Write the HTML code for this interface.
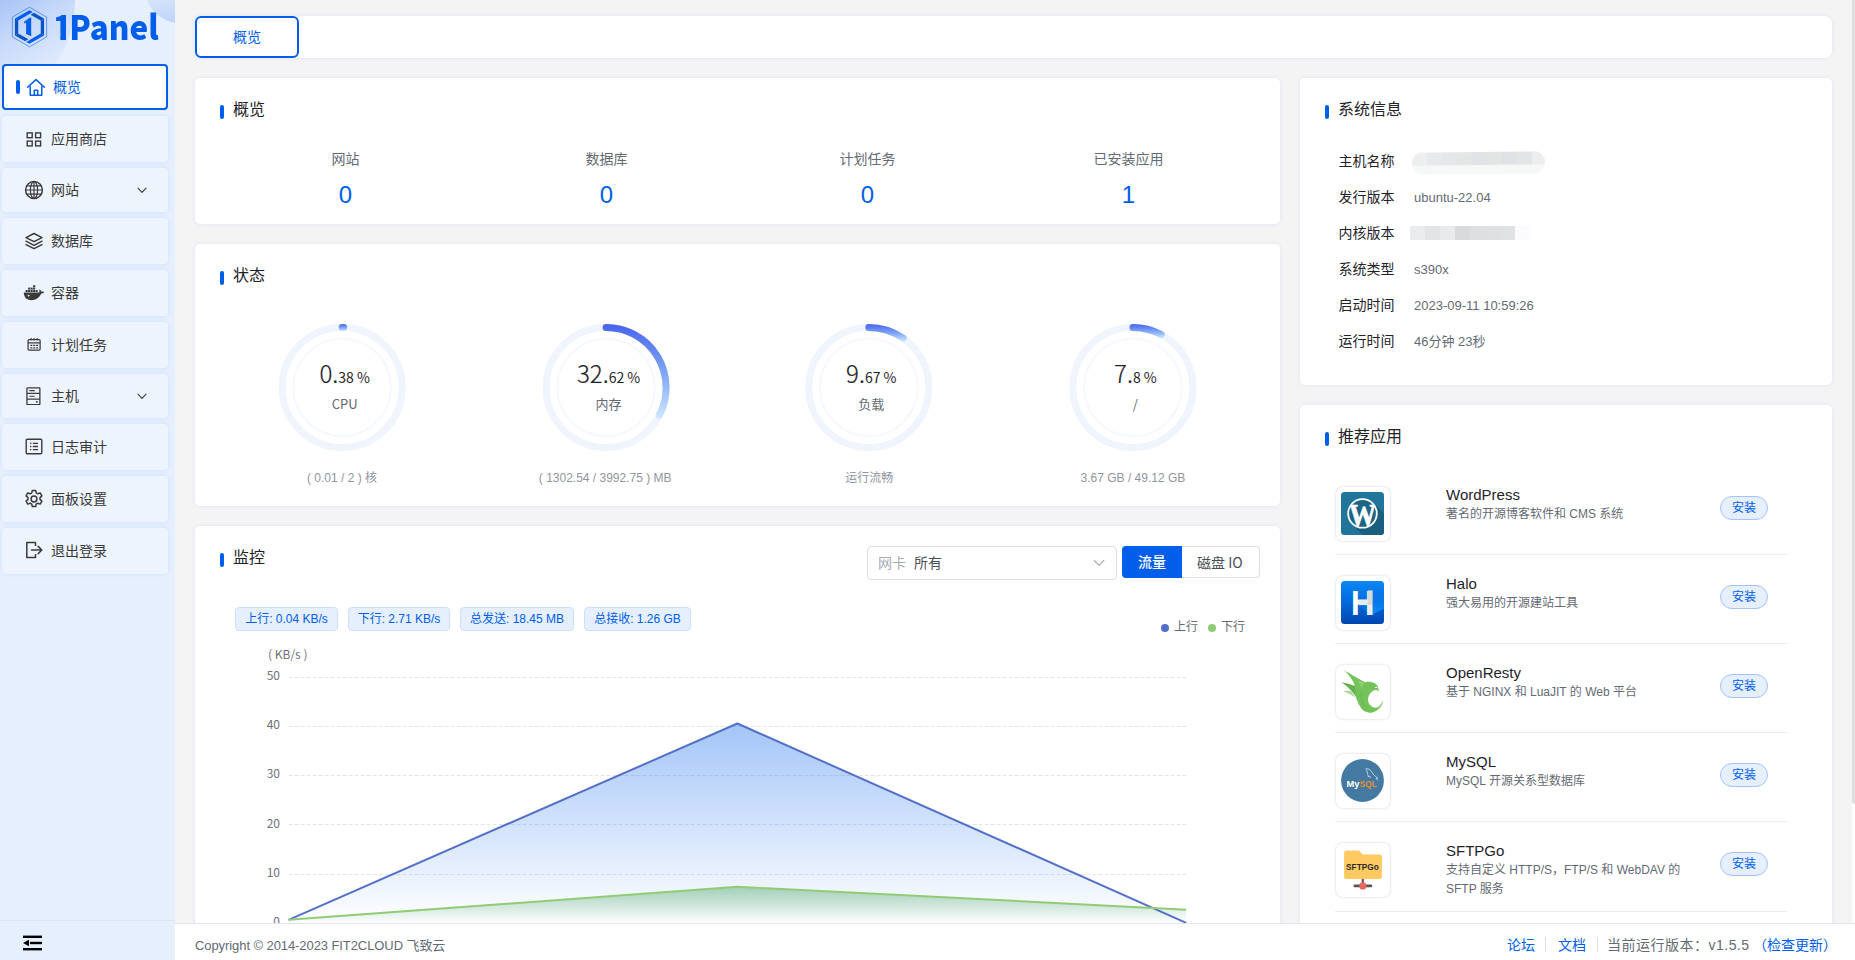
<!DOCTYPE html>
<html lang="zh-CN">
<head>
<meta charset="utf-8">
<title>1Panel</title>
<style>
*{box-sizing:border-box;margin:0;padding:0}
html,body{width:1855px;height:960px;overflow:hidden}
body{position:relative;background:#f4f4f4;font-family:"Liberation Sans","Noto Sans CJK SC",sans-serif;font-size:14px;color:#333;-webkit-font-smoothing:antialiased}
.abs{position:absolute}
.t{position:absolute;white-space:nowrap;line-height:1}
/* sidebar */
#side{position:absolute;left:0;top:0;width:175px;height:960px;background:#e5effe;overflow:hidden}
#side .blob1{position:absolute;left:-149px;top:-111px;width:224px;height:224px;border-radius:50%;background:linear-gradient(150deg,#a6c4f6 0,#c6d9fa 36px,#dce8fc 78px,#e5effe 112px) 149px 111px/90px 120px no-repeat}
#side .blob2{position:absolute;left:145px;top:-47px;width:70px;height:70px;border-radius:50%;background:linear-gradient(170deg,#d9e6fc 55%,#b5cef9 100%)}
.mi{position:absolute;left:2px;width:166px;height:46px;border-radius:4px;background:#eef4fe;box-shadow:0 0 4px rgba(0,94,235,.10)}
.mi.h44{height:44px}
.mi.act{background:#fff;border:2px solid #005eeb;box-shadow:none}
.mi .lb{position:absolute;left:49px;top:50%;transform:translateY(-50%);font-size:14px;line-height:20px;color:#3a3a3a;white-space:nowrap}
.mi.act .lb{left:49px;color:#005eeb}
.mi svg{position:absolute}
/* cards */
.card{position:absolute;background:#fff;border-radius:5px;box-shadow:0 0 4px rgba(0,94,235,.10)}
.ttl{position:absolute;font-size:16px;line-height:20px;color:#1f2329;white-space:nowrap}
.bar{position:absolute;width:4px;height:14px;border-radius:2px;background:#005eeb}
.g{color:#646a73}
.blue{color:#005eeb}
</style>
</head>
<body>
<!-- SIDEBAR -->
<div id="side">
  <div class="blob1"></div>
  <div class="blob2"></div>
  <div id="logo">
    <svg class="abs" style="left:9px;top:4px" width="41" height="46" viewBox="-20.500 -23 41 46">
      <polygon points="0,-19.800 17.150,-9.900 17.150,9.900 0,19.800 -17.150,9.900 -17.150,-9.900" fill="none" stroke="#2f76ef" stroke-width="0.700"/>
      <polygon points="-14.550,-8.400 0,-16.800 3.290,-14.900 -11.260,-6.500" fill="#005eeb"/>
      <polygon points="-14.550,-8.400 -14.550,8.400 -11.260,6.500 -11.260,-6.500" fill="#0b54c6"/>
      <polygon points="-4.390,14.270 -14.550,8.400 -11.260,6.500 -1.100,12.370" fill="#0b54c6"/>
      <polygon points="14.550,8.400 0,16.800 -3.290,14.900 11.260,6.500" fill="#005eeb"/>
      <polygon points="14.550,8.400 14.550,-8.400 11.260,-6.500 11.260,6.500" fill="#0b54c6"/>
      <polygon points="4.390,-14.270 14.550,-8.400 11.260,-6.500 1.100,-12.370" fill="#0b54c6"/>
      <polygon points="1.700,-9.200 0.100,-9.200 -5.300,-5.300 -5.300,-3.600 -3.400,-4.300 -3.400,6.900 1.700,9.200" fill="#005eeb"/>
    </svg>
    <div class="t" id="logotxt" style="left:55px;top:6px;font-size:34px;line-height:40px;font-weight:900;font-family:'Noto Sans CJK SC','Liberation Sans',sans-serif;color:#005eeb;transform-origin:0 0;transform:scaleX(.925)"><span style="display:inline-block;margin-left:-2.200px;margin-right:-3.100px;clip-path:polygon(0 0,100% 0,100% 28px,14.050px 28px,14.050px 40px,7.950px 40px,7.950px 28px,0 28px)">1</span>Panel</div>
  </div>
  <div id="menu">
    <div class="mi act" style="top:64px"><div class="abs" style="left:12px;top:14px;width:4px;height:14px;border-radius:2px;background:#005eeb"></div><svg style="left:22px;top:12px" width="20" height="19" viewBox="0 0 20 19" fill="none" stroke="#005eeb" stroke-width="1.5" stroke-linejoin="round" stroke-linecap="round"><path d="M1.6 9.3 L10 1.6 L18.4 9.3"/><path d="M4.2 8.2 V17.2 H15.8 V8.2"/><path d="M8.3 17 V12.2 H11.7 V17"/></svg><span class="lb">概览</span></div>
    <div class="mi" style="top:116px"><svg style="left:24px;top:16px" width="16" height="15" viewBox="0 0 16 15" fill="none" stroke="#3a3a3a" stroke-width="1.4"><rect x="1.2" y="0.9" width="5" height="4.8"/><rect x="9.6" y="0.9" width="5" height="4.8"/><rect x="1.2" y="9.1" width="5" height="4.8"/><rect x="9.6" y="9.1" width="5" height="4.8"/></svg><span class="lb">应用商店</span></div>
    <div class="mi h44" style="top:168px"><svg style="left:22px;top:12px" width="20" height="20" viewBox="0 0 20 20" fill="none" stroke="#3a3a3a" stroke-width="1.2"><circle cx="10" cy="10" r="8.4" stroke-width="1.5"/><ellipse cx="10" cy="10" rx="3.6" ry="8.4"/><path d="M10 1.6V18.4M1.6 10H18.4M2.8 5.8H17.2M2.8 14.2H17.2"/></svg><span class="lb">网站</span><svg style="left:135px;top:19px" width="10" height="7" viewBox="0 0 10 7" fill="none" stroke="#3a3a3a" stroke-width="1.1" stroke-linecap="round" stroke-linejoin="round"><path d="M1 1.200L5 5.400L9 1.200"/></svg></div>
    <div class="mi" style="top:218px"><svg style="left:22px;top:14px" width="20" height="18" viewBox="0 0 20 18" fill="none" stroke="#3a3a3a" stroke-width="1.5" stroke-linejoin="round" stroke-linecap="round"><path d="M10 1.5 L18 5.6 L10 9.7 L2 5.6 Z"/><path d="M2 9.2 L10 13.3 L18 9.2"/><path d="M2 12.6 L10 16.7 L18 12.6"/></svg><span class="lb">数据库</span></div>
    <div class="mi" style="top:270px"><svg style="left:21px;top:15px" width="22" height="16" viewBox="0 0 22 16" fill="#3a3a3a"><path d="M0.8 7.6 H16.2 C16.6 6.6 16.6 5.6 16.1 4.6 C17.4 4.9 18.1 5.8 18.3 6.6 C19.4 6.3 20.6 6.5 21.3 7 C20.6 8.2 19.4 8.6 18.2 8.6 C16.6 12.6 13.3 15.2 8.3 15.2 C3.6 15.2 0.9 12.6 0.8 7.6 Z"/><rect x="2.6" y="5" width="2.1" height="2"/><rect x="5.1" y="5" width="2.1" height="2"/><rect x="7.6" y="5" width="2.1" height="2"/><rect x="10.1" y="5" width="2.1" height="2"/><rect x="12.6" y="5" width="2.1" height="2"/><rect x="5.1" y="2.6" width="2.1" height="2"/><rect x="7.6" y="2.6" width="2.1" height="2"/><rect x="10.1" y="2.6" width="2.1" height="2"/><rect x="10.1" y="0.2" width="2.1" height="2"/><circle cx="5.6" cy="10.6" r="0.9" fill="#eef4fe"/></svg><span class="lb">容器</span></div>
    <div class="mi" style="top:322px"><svg style="left:25px;top:15.300px" width="14.200" height="14.600" viewBox="0 0 16 16" fill="none" stroke="#3a3a3a" stroke-width="1.4"><rect x="1.2" y="2.6" width="13.6" height="12" rx="1.2"/><path d="M1.2 6.4H14.8" /><path d="M4.6 0.8V3.4M8 0.8V3.4M11.4 0.8V3.4" stroke-width="1.3"/><path d="M3.8 9.3H6M7 9.3H9.2M10.2 9.3H12.4M3.8 12H6M7 12H9.2M10.2 12H12.4" stroke-width="1.5"/></svg><span class="lb">计划任务</span></div>
    <div class="mi h44" style="top:374px"><svg style="left:24.400px;top:12.500px" width="14.800" height="18.500" viewBox="0 0 16 20" fill="none" stroke="#3a3a3a" stroke-width="1.4"><rect x="1" y="1" width="14" height="18" rx="0.6"/><path d="M1 7H15M1 13H15"/><path d="M3.6 4H9.4M3.6 10H9.4" stroke-width="1.3"/><path d="M10.6 16H12.6" stroke-width="1.6"/></svg><span class="lb">主机</span><svg style="left:135px;top:19px" width="10" height="7" viewBox="0 0 10 7" fill="none" stroke="#3a3a3a" stroke-width="1.1" stroke-linecap="round" stroke-linejoin="round"><path d="M1 1.200L5 5.400L9 1.200"/></svg></div>
    <div class="mi" style="top:424px"><svg style="left:23px;top:14px" width="18" height="17" viewBox="0 0 18 17" fill="none" stroke="#3a3a3a" stroke-width="1.4"><rect x="1.2" y="1.2" width="15.6" height="14.6" rx="1.2"/><path d="M5 5.4H6.4M7.8 5.4H13M5 8.5H6.4M7.8 8.5H13M5 11.6H6.4M7.8 11.6H13" stroke-width="1.3"/></svg><span class="lb">日志审计</span></div>
    <div class="mi" style="top:476px"><svg style="left:22px;top:13px" width="20" height="20" viewBox="0 0 20 20" fill="none" stroke="#3a3a3a" stroke-width="1.5" stroke-linejoin="round"><path d="M8.3 1.4h3.4l.5 2.5 1.6.9 2.4-.9 1.7 3-1.9 1.7v1.8l1.9 1.7-1.7 3-2.4-.9-1.6.9-.5 2.5H8.3l-.5-2.5-1.6-.9-2.4.9-1.7-3 1.9-1.7V8.6L2.100 6.900l1.700-3 2.400.9 1.600-.9z"/><circle cx="10" cy="10" r="2.9"/></svg><span class="lb">面板设置</span></div>
    <div class="mi" style="top:528px"><svg style="left:23px;top:13px" width="19" height="18" viewBox="0 0 19 18" fill="none" stroke="#3a3a3a" stroke-width="1.5" stroke-linejoin="round"><path d="M10.5 5V1.400H1.800V16.600H10.500V13"/><path d="M6.500 9H16.500M13.200 5.400L16.800 9L13.200 12.600" stroke-linecap="round"/></svg><span class="lb">退出登录</span></div>
  </div>
  <div class="abs" style="left:0;top:920px;width:175px;height:1px;background:#dfe5f0"></div>
  <div id="collapse">
    <svg class="abs" style="left:23px;top:935px" width="20" height="17" viewBox="0 0 20 17" fill="#000"><rect x="0" y="0.600" width="19" height="2.400"/><rect x="7" y="6.800" width="12" height="2.400"/><rect x="0" y="13" width="19" height="2.400"/><path d="M0 8L6 4.800V11.200Z"/></svg>
  </div>
</div>

<!-- TOP TAB BAR -->
<div class="card" style="left:195px;top:16px;width:1637px;height:42px;border-radius:5px 8px 8px 5px"></div>
<div class="abs" style="left:195px;top:16px;width:104px;height:42px;border:2px solid #005eeb;border-radius:6px;background:#fff"></div>
<div class="t blue" style="left:233px;top:29px;font-size:14px;line-height:16px">概览</div>

<!-- OVERVIEW CARD -->
<div class="card" id="c-over" style="left:195px;top:78px;width:1085px;height:146px">
  <div class="bar" style="left:25px;top:27px"></div>
  <div class="ttl" style="left:38px;top:22px">概览</div>
  <div class="t g" style="left:90.5px;width:120px;text-align:center;top:73px;font-size:14px;line-height:16px">网站</div>
  <div class="t blue" style="left:90.5px;width:120px;text-align:center;top:102.500px;font-size:24px;line-height:28px">0</div>
  <div class="t g" style="left:351.5px;width:120px;text-align:center;top:73px;font-size:14px;line-height:16px">数据库</div>
  <div class="t blue" style="left:351.5px;width:120px;text-align:center;top:102.500px;font-size:24px;line-height:28px">0</div>
  <div class="t g" style="left:612.5px;width:120px;text-align:center;top:73px;font-size:14px;line-height:16px">计划任务</div>
  <div class="t blue" style="left:612.5px;width:120px;text-align:center;top:102.500px;font-size:24px;line-height:28px">0</div>
  <div class="t g" style="left:873.5px;width:120px;text-align:center;top:73px;font-size:14px;line-height:16px">已安装应用</div>
  <div class="t blue" style="left:873.5px;width:120px;text-align:center;top:102.500px;font-size:24px;line-height:28px">1</div>
</div>
<!-- STATUS CARD -->
<div class="card" id="c-stat" style="left:195px;top:244px;width:1085px;height:262px">
  <div class="bar" style="left:25px;top:27px"></div>
  <div class="ttl" style="left:38px;top:22px">状态</div>
  <svg class="abs" style="left:0;top:0" width="1085" height="262" viewBox="0 0 1085 262">
    <defs>
      <linearGradient id="gg0" gradientUnits="userSpaceOnUse" x1="0" y1="80.0" x2="0" y2="87.0"><stop offset="0" stop-color="#4863ee"/><stop offset=".55" stop-color="#84a9f7"/><stop offset="1" stop-color="#d0e8ff"/></linearGradient>
      <linearGradient id="gg1" gradientUnits="userSpaceOnUse" x1="0" y1="80.0" x2="0" y2="174.6"><stop offset="0" stop-color="#4863ee"/><stop offset=".55" stop-color="#84a9f7"/><stop offset="1" stop-color="#d0e8ff"/></linearGradient>
      <linearGradient id="gg2" gradientUnits="userSpaceOnUse" x1="0" y1="80.0" x2="0" y2="97.7"><stop offset="0" stop-color="#4863ee"/><stop offset=".55" stop-color="#84a9f7"/><stop offset="1" stop-color="#d0e8ff"/></linearGradient>
      <linearGradient id="gg3" gradientUnits="userSpaceOnUse" x1="0" y1="80.0" x2="0" y2="94.1"><stop offset="0" stop-color="#4863ee"/><stop offset=".55" stop-color="#84a9f7"/><stop offset="1" stop-color="#d0e8ff"/></linearGradient>
    </defs>
    <circle cx="147.2" cy="143.5" r="60" fill="none" stroke="#eff4fd" stroke-width="7"/>
    <circle cx="147.2" cy="143.5" r="49" fill="none" stroke="#f5f8fe" stroke-width="3" opacity=".45"/>
    <circle cx="147.2" cy="143.5" r="48.5" fill="none" stroke="#f4f7fe" stroke-width="1.200"/>
    <path d="M147.20 83.50 A60 60 0 0 1 148.63 83.52" fill="none" stroke="url(#gg0)" stroke-width="7" stroke-linecap="round"/>
    <circle cx="411.1" cy="143.5" r="60" fill="none" stroke="#eff4fd" stroke-width="7"/>
    <circle cx="411.1" cy="143.5" r="49" fill="none" stroke="#f5f8fe" stroke-width="3" opacity=".45"/>
    <circle cx="411.1" cy="143.5" r="48.5" fill="none" stroke="#f4f7fe" stroke-width="1.200"/>
    <path d="M411.10 83.50 A60 60 0 0 1 464.35 171.14" fill="none" stroke="url(#gg1)" stroke-width="7" stroke-linecap="round"/>
    <circle cx="673.8" cy="143.5" r="60" fill="none" stroke="#eff4fd" stroke-width="7"/>
    <circle cx="673.8" cy="143.5" r="49" fill="none" stroke="#f5f8fe" stroke-width="3" opacity=".45"/>
    <circle cx="673.8" cy="143.5" r="48.5" fill="none" stroke="#f4f7fe" stroke-width="1.200"/>
    <path d="M673.80 83.50 A60 60 0 0 1 708.05 94.24" fill="none" stroke="url(#gg2)" stroke-width="7" stroke-linecap="round"/>
    <circle cx="937.9" cy="143.5" r="60" fill="none" stroke="#eff4fd" stroke-width="7"/>
    <circle cx="937.9" cy="143.5" r="49" fill="none" stroke="#f5f8fe" stroke-width="3" opacity=".45"/>
    <circle cx="937.9" cy="143.5" r="48.5" fill="none" stroke="#f4f7fe" stroke-width="1.200"/>
    <path d="M937.90 83.50 A60 60 0 0 1 966.14 90.56" fill="none" stroke="url(#gg3)" stroke-width="7" stroke-linecap="round"/>
  </svg>
  <div class="t" style="left:79.7px;width:140px;text-align:center;top:114px;line-height:30px;font-family:'Noto Sans CJK SC','Liberation Sans',sans-serif;color:#1f2329"><span style="font-size:24px;font-weight:300;-webkit-text-stroke:.2px #1f2329">0.</span><span style="font-size:14px">38 %</span></div>
  <div class="t g" style="left:79.7px;width:140px;text-align:center;top:151px;font-size:13px;line-height:18px;font-family:'Noto Sans CJK SC','Liberation Sans',sans-serif">CPU</div>
  <div class="t" style="left:47.0px;width:200px;text-align:center;top:226px;font-size:12px;line-height:16px;color:#8f959e">( 0.01 / 2 ) 核</div>
  <div class="t" style="left:343.6px;width:140px;text-align:center;top:114px;line-height:30px;font-family:'Noto Sans CJK SC','Liberation Sans',sans-serif;color:#1f2329"><span style="font-size:24px;font-weight:300;-webkit-text-stroke:.2px #1f2329">32.</span><span style="font-size:14px">62 %</span></div>
  <div class="t g" style="left:343.6px;width:140px;text-align:center;top:151px;font-size:13px;line-height:18px;font-family:'Noto Sans CJK SC','Liberation Sans',sans-serif">内存</div>
  <div class="t" style="left:310.2px;width:200px;text-align:center;top:226px;font-size:12px;line-height:16px;color:#8f959e">( 1302.54 / 3992.75 ) MB</div>
  <div class="t" style="left:606.3px;width:140px;text-align:center;top:114px;line-height:30px;font-family:'Noto Sans CJK SC','Liberation Sans',sans-serif;color:#1f2329"><span style="font-size:24px;font-weight:300;-webkit-text-stroke:.2px #1f2329">9.</span><span style="font-size:14px">67 %</span></div>
  <div class="t g" style="left:606.3px;width:140px;text-align:center;top:151px;font-size:13px;line-height:18px;font-family:'Noto Sans CJK SC','Liberation Sans',sans-serif">负载</div>
  <div class="t" style="left:574.3px;width:200px;text-align:center;top:226px;font-size:12px;line-height:16px;color:#8f959e">运行流畅</div>
  <div class="t" style="left:870.4px;width:140px;text-align:center;top:114px;line-height:30px;font-family:'Noto Sans CJK SC','Liberation Sans',sans-serif;color:#1f2329"><span style="font-size:24px;font-weight:300;-webkit-text-stroke:.2px #1f2329">7.</span><span style="font-size:14px">8 %</span></div>
  <div class="t g" style="left:870.4px;width:140px;text-align:center;top:151px;font-size:13px;line-height:18px;font-family:'Noto Sans CJK SC','Liberation Sans',sans-serif">/</div>
  <div class="t" style="left:837.9px;width:200px;text-align:center;top:226px;font-size:12px;line-height:16px;color:#8f959e">3.67 GB / 49.12 GB</div>
</div>
<!-- MONITOR CARD -->
<div class="card" id="c-mon" style="left:195px;top:526px;width:1085px;height:460px">
  <div class="bar" style="left:25px;top:27px"></div>
  <div class="ttl" style="left:38px;top:22px">监控</div>
  <div class="abs" style="left:672px;top:20px;width:250px;height:34px;border:1px solid #dcdfe6;border-radius:4px;background:#fff"></div>
  <div class="t" style="left:683px;top:29px;font-size:14px;line-height:16px;color:#a8abb2">网卡</div>
  <div class="t" style="left:719px;top:29px;font-size:14px;line-height:16px;color:#4a4f57">所有</div>
  <svg class="abs" style="left:898px;top:33px" width="12" height="8" viewBox="0 0 12 8" fill="none" stroke="#a8abb2" stroke-width="1.1" stroke-linecap="round" stroke-linejoin="round"><path d="M1.2 1.500L6 6.300L10.800 1.500"/></svg>
  <div class="abs" style="left:927px;top:20px;width:60px;height:32px;background:#005eeb;border-radius:4px 0 0 4px"></div>
  <div class="t" style="left:943px;top:28px;font-size:14px;line-height:16px;color:#fff;font-weight:500">流量</div>
  <div class="abs" style="left:987px;top:20px;width:78px;height:32px;background:#fff;border:1px solid #dcdfe6;border-left:none;border-radius:0 4px 4px 0"></div>
  <div class="t" style="left:1002px;top:28px;font-size:14px;line-height:16px;color:#4a4f57;font-family:'Noto Sans CJK SC','Liberation Sans',sans-serif">磁盘 IO</div>
  <div class="abs" style="left:40px;top:81px;width:103px;height:24px;background:#e6effd;border:1px solid #ccdffb;border-radius:4px;text-align:center;font-size:12px;line-height:22px;color:#005eeb;white-space:nowrap">上行: 0.04 KB/s</div>
  <div class="abs" style="left:153px;top:81px;width:102px;height:24px;background:#e6effd;border:1px solid #ccdffb;border-radius:4px;text-align:center;font-size:12px;line-height:22px;color:#005eeb;white-space:nowrap">下行: 2.71 KB/s</div>
  <div class="abs" style="left:265px;top:81px;width:114px;height:24px;background:#e6effd;border:1px solid #ccdffb;border-radius:4px;text-align:center;font-size:12px;line-height:22px;color:#005eeb;white-space:nowrap">总发送: 18.45 MB</div>
  <div class="abs" style="left:389px;top:81px;width:107px;height:24px;background:#e6effd;border:1px solid #ccdffb;border-radius:4px;text-align:center;font-size:12px;line-height:22px;color:#005eeb;white-space:nowrap">总接收: 1.26 GB</div>
  <div class="abs" style="left:966px;top:98px;width:8px;height:8px;border-radius:50%;background:#5470c6"></div>
  <div class="t" style="left:979px;top:94px;font-size:12px;line-height:14px;color:#646a73">上行</div>
  <div class="abs" style="left:1013px;top:98px;width:8px;height:8px;border-radius:50%;background:#91cc75"></div>
  <div class="t" style="left:1026px;top:94px;font-size:12px;line-height:14px;color:#646a73">下行</div>
  <svg class="abs" style="left:0;top:0" width="1085" height="460" viewBox="0 0 1085 460">
    <defs><linearGradient id="ab" x1="0" y1="0" x2="0" y2="1"><stop offset="0" stop-color="#005eeb" stop-opacity=".36"/><stop offset="1" stop-color="#005eeb" stop-opacity="0"/></linearGradient><linearGradient id="ag" x1="0" y1="0" x2="0" y2="1"><stop offset="0" stop-color="#1b8f3c" stop-opacity=".36"/><stop offset="1" stop-color="#1b8f3c" stop-opacity="0"/></linearGradient></defs>
    <path d="M93.6 151.50H991.2" stroke="#e0e6f1" stroke-width="1" stroke-dasharray="4 2" fill="none"/>
    <text x="85" y="153.7" text-anchor="end" font-size="12" fill="#6e7079" font-family="Noto Sans CJK SC, Liberation Sans, sans-serif">50</text>
    <path d="M93.6 200.50H991.2" stroke="#e0e6f1" stroke-width="1" stroke-dasharray="4 2" fill="none"/>
    <text x="85" y="203.0" text-anchor="end" font-size="12" fill="#6e7079" font-family="Noto Sans CJK SC, Liberation Sans, sans-serif">40</text>
    <path d="M93.6 249.50H991.2" stroke="#e0e6f1" stroke-width="1" stroke-dasharray="4 2" fill="none"/>
    <text x="85" y="252.3" text-anchor="end" font-size="12" fill="#6e7079" font-family="Noto Sans CJK SC, Liberation Sans, sans-serif">30</text>
    <path d="M93.6 298.50H991.2" stroke="#e0e6f1" stroke-width="1" stroke-dasharray="4 2" fill="none"/>
    <text x="85" y="301.5" text-anchor="end" font-size="12" fill="#6e7079" font-family="Noto Sans CJK SC, Liberation Sans, sans-serif">20</text>
    <path d="M93.6 348.50H991.2" stroke="#e0e6f1" stroke-width="1" stroke-dasharray="4 2" fill="none"/>
    <text x="85" y="350.7" text-anchor="end" font-size="12" fill="#6e7079" font-family="Noto Sans CJK SC, Liberation Sans, sans-serif">10</text>
    <text x="85" y="400.0" text-anchor="end" font-size="12" fill="#6e7079" font-family="Noto Sans CJK SC, Liberation Sans, sans-serif">0</text>
    <text x="73" y="133" font-size="12" fill="#6e7079" font-family="Noto Sans CJK SC, Liberation Sans, sans-serif">( KB/s )</text>
    <polygon points="93.6,393.8 542.4,197.5 991.2,396.8 991.2,397.5 93.6,397.5" fill="url(#ab)"/>
    <polygon points="93.6,393.8 542.4,360.8 991.2,383.7 991.2,397.5 93.6,397.5" fill="url(#ag)"/>
    <polyline points="93.6,393.8 542.4,197.5 991.2,396.8" fill="none" stroke="#5470c6" stroke-width="2" stroke-linejoin="bevel"/>
    <polyline points="93.6,393.8 542.4,360.8 991.2,383.7" fill="none" stroke="#91cc75" stroke-width="2" stroke-linejoin="bevel"/>
  </svg>
</div>
<!-- SYSINFO CARD -->
<div class="card" id="c-sys" style="left:1300px;top:78px;width:532px;height:307px">
  <div class="bar" style="left:25px;top:27px"></div>
  <div class="ttl" style="left:38px;top:22px">系统信息</div>
  <div class="t" style="left:38.500px;top:73.5px;font-size:14px;line-height:18px;color:#1f2329">主机名称</div>
  <div class="t" style="left:38.500px;top:109.5px;font-size:14px;line-height:18px;color:#1f2329">发行版本</div>
  <div class="t" style="left:114px;top:111.5px;font-size:13px;line-height:16px;color:#646a73">ubuntu-22.04</div>
  <div class="t" style="left:38.500px;top:145.5px;font-size:14px;line-height:18px;color:#1f2329">内核版本</div>
  <div class="t" style="left:38.500px;top:181.5px;font-size:14px;line-height:18px;color:#1f2329">系统类型</div>
  <div class="t" style="left:114px;top:183.5px;font-size:13px;line-height:16px;color:#646a73">s390x</div>
  <div class="t" style="left:38.500px;top:217.5px;font-size:14px;line-height:18px;color:#1f2329">启动时间</div>
  <div class="t" style="left:114px;top:219.5px;font-size:13px;line-height:16px;color:#646a73">2023-09-11 10:59:26</div>
  <div class="t" style="left:38.500px;top:253.5px;font-size:14px;line-height:18px;color:#1f2329">运行时间</div>
  <div class="t" style="left:114px;top:255.5px;font-size:13px;line-height:16px;color:#646a73">46分钟 23秒</div>
  <div class="abs" style="left:112px;top:73.500px;width:133px;height:21.500px;border-radius:11px 12px 12px 11px;overflow:hidden;background:#f6f7f7;filter:blur(.5px);transform:rotate(-.6deg)"><div style="height:13px;background:linear-gradient(90deg,#eceeef 0px,#eceeef 15px,#e8e9ea 15px,#e8e9ea 30px,#e6e7e8 30px,#e6e7e8 45px,#e4e5e5 45px,#e4e5e5 60px,#e0e3e6 60px,#e0e3e6 75px,#e3e4e4 75px,#e3e4e4 90px,#dfe2e5 90px,#dfe2e5 105px,#e3e4e5 105px,#e3e4e5 120px,#ecedee 120px,#ecedee 135px)"></div></div>
  <div class="abs" style="left:110px;top:147.500px;width:120px;height:14.300px;background:linear-gradient(90deg,#eaebec 0px,#eaebec 15px,#e3e4e6 15px,#e3e4e6 30px,#e9eaeb 30px,#e9eaeb 45px,#d9dadc 45px,#d9dadc 60px,#dedfe0 60px,#dedfe0 75px,#dfe0e1 75px,#dfe0e1 90px,#e0e1e2 90px,#e0e1e2 105px,#fbfbfd 105px,#fbfbfd 120px);filter:blur(.4px)"></div>
</div>
<!-- APPS CARD -->
<div class="card" id="c-app" style="left:1300px;top:405px;width:532px;height:600px">
  <div class="bar" style="left:25px;top:27px"></div>
  <div class="ttl" style="left:38px;top:22px">推荐应用</div>
  <div class="abs" style="left:35.500px;top:81.5px;width:54px;height:54px;border-radius:7px;background:#fff;box-shadow:0 0 2.500px rgba(0,0,0,.2)"><svg class="abs" style="left:5.500px;top:5.500px" width="43" height="43" viewBox="0 0 43 43"><defs><clipPath id="wpc"><rect width="43" height="43" rx="3.500"/></clipPath><clipPath id="wpo"><circle cx="21.500" cy="21.400" r="13.700"/></clipPath></defs><g clip-path="url(#wpc)"><rect width="43" height="43" fill="#21759b"/><path d="M10.800 32.100 L32.200 10.700 L60 38.500 L38.600 60 Z" fill="#1b5f7f"/><circle cx="21.500" cy="21.400" r="14.300" fill="#1d6587" stroke="#fff" stroke-width="1.800"/><g clip-path="url(#wpo)"><text x="0" y="34.500" text-anchor="middle" font-family="Liberation Serif, serif" font-weight="bold" font-size="31.500" fill="#fff" stroke="#fff" stroke-width=".7" transform="translate(21.500 -.5) scale(.86 1)">W</text></g></g></svg></div>
  <div class="t" style="left:146px;top:80.0px;font-size:15px;line-height:20px;color:#1f2329">WordPress</div>
  <div class="t" style="left:146px;top:99.5px;font-size:12px;line-height:19px;color:#646a73">著名的开源博客软件和 CMS 系统</div>
  <div class="abs" style="left:420px;top:91.0px;width:48px;height:24px;border-radius:12px;background:#e6effd;border:1px solid #a3c4f8;text-align:center;font-size:12px;line-height:22px;color:#005eeb">安装</div>
  <div class="abs" style="left:35px;top:149.0px;width:452px;height:1px;background:#ebedf0"></div>
  <div class="abs" style="left:35.500px;top:170.5px;width:54px;height:54px;border-radius:7px;background:#fff;box-shadow:0 0 2.500px rgba(0,0,0,.2)"><svg class="abs" style="left:5.500px;top:5.500px" width="43" height="43" viewBox="0 0 43 43"><defs><linearGradient id="hg" x1="0" y1="0" x2="0" y2="1"><stop offset="0" stop-color="#0a88f6"/><stop offset=".5" stop-color="#0468dc"/><stop offset="1" stop-color="#0046b0"/></linearGradient><linearGradient id="hg2" x1="0" y1="0" x2="0" y2="1"><stop offset="0" stop-color="#0a8efc" stop-opacity="0"/><stop offset="1" stop-color="#0a8efc" stop-opacity="1"/></linearGradient><clipPath id="hc"><rect width="43" height="43" rx="3.500"/></clipPath></defs><g clip-path="url(#hc)"><rect width="43" height="43" fill="url(#hg)"/><path d="M31.500 12 H43 V27.400 L31.500 33.500 Z" fill="url(#hg2)"/><path d="M17.400 24.300 H26.900 V31.400 Z" fill="#0a80f0" opacity=".45"/><text x="0" y="33.900" font-family="Liberation Sans, sans-serif" font-weight="bold" font-size="35.600" fill="#fff" transform="translate(9.950 0) scale(.886 1)">H</text><rect x="17.400" y="18.400" width="9.600" height="5.700" fill="#e9e9e9"/><rect x="26.900" y="9.400" width="4.700" height="14.700" fill="#d9d9d9"/><rect x="26.900" y="24.100" width="4.700" height="9.800" fill="#efece9"/></g></svg></div>
  <div class="t" style="left:146px;top:169.0px;font-size:15px;line-height:20px;color:#1f2329">Halo</div>
  <div class="t" style="left:146px;top:188.5px;font-size:12px;line-height:19px;color:#646a73">强大易用的开源建站工具</div>
  <div class="abs" style="left:420px;top:180.0px;width:48px;height:24px;border-radius:12px;background:#e6effd;border:1px solid #a3c4f8;text-align:center;font-size:12px;line-height:22px;color:#005eeb">安装</div>
  <div class="abs" style="left:35px;top:238.0px;width:452px;height:1px;background:#ebedf0"></div>
  <div class="abs" style="left:35.500px;top:259.5px;width:54px;height:54px;border-radius:7px;background:#fff;box-shadow:0 0 2.500px rgba(0,0,0,.2)"><svg class="abs" style="left:0;top:0" width="54" height="54" viewBox="0 0 54 54"><g transform="translate(-1.700 -1)"><path d="M8.900 27.200 C12 26.600 15 26.800 17.200 27.500 L21.200 33.800 C18 31.500 14 29 8.900 27.200 Z" fill="#a9da95"/><path d="M6.900 18.300 C12 19 17 20.500 21.200 22.100 L23.500 36.500 C21.500 32 18 27.500 14.300 24.100 C12 21.800 9.500 19.800 6.900 18.300 Z" fill="#68b04f"/><path d="M9.200 6 C17 10.500 24 14.500 30.900 18.300 C32.800 17.800 34.800 17.700 36.700 18.100 C38.500 18.400 40.100 19 41.300 19.800 C42.500 20.700 43.200 21.700 43.600 22.900 L44.900 27.700 C44 26.900 43.200 26.400 42.400 26.100 C40.800 26.100 39.200 26.600 37.800 27.500 C36.200 28.600 35 30.200 34.400 32.100 C33.800 33.600 33.600 35.200 33.800 36.700 C34.100 38.500 34.900 40.100 36.100 41.300 C37.200 42.500 38.500 43.400 40.100 43.800 C41.700 44 43.300 43.500 44.700 42.400 C46.300 41.100 47.800 38.900 48.700 36.100 C48.700 38.200 48.100 40.200 47 41.800 C45.900 43.700 44.300 45.300 42.400 46.400 C40.600 47.600 38.700 48.500 36.700 48.700 C34.600 48.900 32.700 48.500 30.900 47.600 C28.800 46.500 27.100 44.700 25.800 42.400 C24.600 40.600 23.600 38.700 22.900 36.700 C22 34.500 21.500 32.200 21.200 29.800 C21 27.100 20.900 24.500 20.600 21.800 C19.800 19.400 18.700 17.100 17.200 14.900 C16 13 14.700 11.300 13.200 9.700 C12 8.300 10.700 7.100 9.200 6 Z" fill="#74c35a"/><path d="M22.500 16.500 L30.900 18.300 C29.200 20.300 28 22.600 27.500 25.200 C26.800 22 25 19 22.500 16.500 Z" fill="#89cf70"/><path d="M27.500 25.200 C27 30 27.500 35 29.500 39.500 C30.500 42 32 44.500 34.500 46.500 C31 44.500 28.500 41.500 27 38 C25.500 34 25.800 29.500 27.500 25.200 Z" fill="#6ab951" opacity=".7"/><ellipse cx="41.900" cy="23.400" rx="1.100" ry=".6" fill="#fff"/></g></svg></div>
  <div class="t" style="left:146px;top:258.0px;font-size:15px;line-height:20px;color:#1f2329">OpenResty</div>
  <div class="t" style="left:146px;top:277.5px;font-size:12px;line-height:19px;color:#646a73">基于 NGINX 和 LuaJIT 的 Web 平台</div>
  <div class="abs" style="left:420px;top:269.0px;width:48px;height:24px;border-radius:12px;background:#e6effd;border:1px solid #a3c4f8;text-align:center;font-size:12px;line-height:22px;color:#005eeb">安装</div>
  <div class="abs" style="left:35px;top:327.3px;width:452px;height:1px;background:#ebedf0"></div>
  <div class="abs" style="left:35.500px;top:348.5px;width:54px;height:54px;border-radius:7px;background:#fff;box-shadow:0 0 2.500px rgba(0,0,0,.2)"><svg class="abs" style="left:0;top:0" width="54" height="54" viewBox="0 0 54 54"><circle cx="26.500" cy="26.500" r="21.400" fill="#4479a1"/><text x="10.600" y="32.700" font-family="Liberation Sans, sans-serif" font-weight="bold" font-size="9.300" fill="#fff">My<tspan fill="#e8902a" font-size="8.300" dx=".3">SQL</tspan></text><path d="M29.700 14.800 C32 14.200 34.300 15.500 36 18.200 C37.500 20.800 39.300 22.600 42 24 L40.200 24.600 L41.600 26.200 M30.600 16 C31.200 18.500 31.800 20.500 32.400 22.800 L33.800 22.300 L34.400 23.600" fill="none" stroke="#e9f0f6" stroke-width=".7" stroke-linecap="round" stroke-linejoin="round"/></svg></div>
  <div class="t" style="left:146px;top:347.0px;font-size:15px;line-height:20px;color:#1f2329">MySQL</div>
  <div class="t" style="left:146px;top:366.5px;font-size:12px;line-height:19px;color:#646a73">MySQL 开源关系型数据库</div>
  <div class="abs" style="left:420px;top:358.0px;width:48px;height:24px;border-radius:12px;background:#e6effd;border:1px solid #a3c4f8;text-align:center;font-size:12px;line-height:22px;color:#005eeb">安装</div>
  <div class="abs" style="left:35px;top:416.4px;width:452px;height:1px;background:#ebedf0"></div>
  <div class="abs" style="left:35.500px;top:437.5px;width:54px;height:54px;border-radius:7px;background:#fff;box-shadow:0 0 2.500px rgba(0,0,0,.2)"><svg class="abs" style="left:0;top:0" width="54" height="54" viewBox="0 0 54 54"><path d="M10.100 7.400 H21.800 C22.800 7.400 23.300 7.700 24 8.500 L25.600 10.400 C26.200 11.100 26.800 11.400 27.800 11.400 H43.900 C45 11.400 45.900 12.300 45.900 13.400 V34.100 C45.900 35.200 45 36.100 43.900 36.100 H10.100 C9 36.100 8.100 35.200 8.100 34.100 V9.400 C8.100 8.300 9 7.400 10.100 7.400 Z" fill="#ffca62"/><rect x="25.700" y="36" width="2.200" height="4.500" fill="#5a5a5a"/><path d="M18.800 42.900 H35" stroke="#555" stroke-width="2.600" stroke-linecap="round"/><circle cx="26.800" cy="42.900" r="3.600" fill="#e8685f"/><text x="0" y="27.200" font-family="Liberation Sans, sans-serif" font-weight="bold" font-size="9" fill="#2d2a26" transform="translate(10.100 0) scale(.92 1)">SFTPGo</text></svg></div>
  <div class="t" style="left:146px;top:436.0px;font-size:15px;line-height:20px;color:#1f2329">SFTPGo</div>
  <div class="t" style="left:146px;top:455.5px;font-size:12px;line-height:19px;color:#646a73">支持自定义 HTTP/S，FTP/S 和 WebDAV 的<br>SFTP 服务</div>
  <div class="abs" style="left:420px;top:447.0px;width:48px;height:24px;border-radius:12px;background:#e6effd;border:1px solid #a3c4f8;text-align:center;font-size:12px;line-height:22px;color:#005eeb">安装</div>
  <div class="abs" style="left:35px;top:505.6px;width:452px;height:1px;background:#ebedf0"></div>
</div>

<!-- FOOTER -->
<div id="foot" class="abs" style="left:175px;top:923px;width:1680px;height:37px;background:#fff;border-top:1px solid #e3e6ee">
  <div class="t" id="copy" style="left:20px;top:14px;font-size:13px;line-height:16px;color:#646a73;letter-spacing:-.08px">Copyright © 2014-2023 FIT2CLOUD 飞致云</div>
  <div class="t blue" style="left:1332px;top:12px;font-size:14px;line-height:18px">论坛</div>
  <div class="abs" style="left:1370px;top:13px;width:1px;height:15px;background:#dcdfe6"></div>
  <div class="t blue" style="left:1383px;top:12px;font-size:14px;line-height:18px">文档</div>
  <div class="abs" style="left:1422px;top:13px;width:1px;height:15px;background:#dcdfe6"></div>
  <div class="t" id="ver" style="left:1432px;top:12px;font-size:14px;line-height:18px;color:#646a73;letter-spacing:.5px">当前运行版本：v1.5.5</div>
  <div class="t blue" id="chk" style="left:1578px;top:12px;font-size:14px;line-height:18px">（检查更新）</div>
</div>
<!-- scrollbar -->
<div class="abs" style="left:1852px;top:0;width:3px;height:923px;background:#fdfdfd"></div>
<div class="abs" style="left:1852px;top:0;width:4px;height:804px;background:#dddee0;border-radius:0 0 0 3px"></div>
</body>
</html>
